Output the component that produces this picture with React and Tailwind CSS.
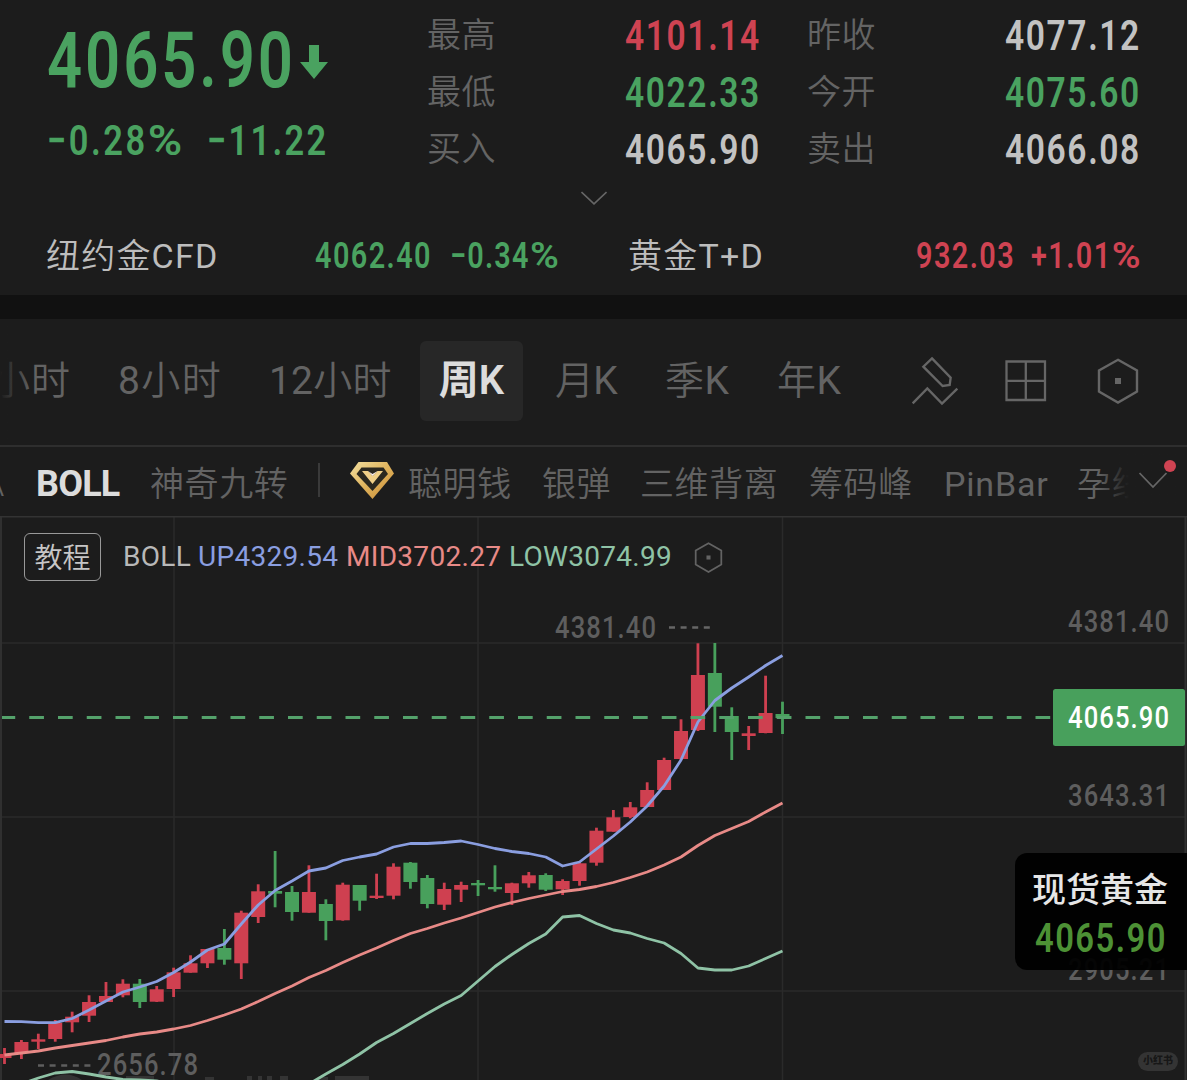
import clsx from "clsx";

const sans = "font-['Roboto','Noto_Sans_CJK_SC',sans-serif]";

const quotes = [
  { label: "最高", value: "4101.14", color: "text-[#cf4352]" },
  { label: "昨收", value: "4077.12", color: "text-[#c2c2c2]" },
  { label: "最低", value: "4022.33", color: "text-[#4aa260]" },
  { label: "今开", value: "4075.60", color: "text-[#4aa260]" },
  { label: "买入", value: "4065.90", color: "text-[#c2c2c2]" },
  { label: "卖出", value: "4066.08", color: "text-[#c2c2c2]" },
];

const periods = [
  { latin: "8", label: "小时", width: "w-[151px] tracking-[1.4px]" },
  { latin: "12", label: "小时", width: "w-[151px] tracking-[0.2px]" },
  { label: "周", unit: "K", active: true },
  { label: "月", unit: "K", width: "w-[110px] tracking-[-0.7px]" },
  { label: "季", unit: "K", width: "w-[112px] tracking-[0.6px]" },
  { label: "年", unit: "K", width: "w-[134px] tracking-[0.6px]" },
];

const indicators = [
  { label: "聪明钱", width: "w-[134px]" },
  { label: "银弹", width: "w-[98px]" },
  { label: "三维背离", width: "w-[169px]" },
  { label: "筹码峰", width: "w-[135px]" },
  { label: "PinBar", width: "w-[133px] font-normal tracking-[0.8px]" },
  { label: "孕线", width: "w-[70px]" },
];

const STEP = 16.913;
const xAt = (i) => 4.5 + i * STEP;

// [direction, body top, body bottom, high, low]
const candles = [
  ["up", 1054, 1058, 1048, 1064],
  ["up", 1042, 1053, 1040, 1059],
  ["up", 1039.3, 1041.7, 1033.7, 1049],
  ["up", 1022.7, 1039, 1020, 1041.7],
  ["up", 1016.7, 1022.3, 1011.7, 1032.3],
  ["up", 1002, 1015.7, 995.3, 1022],
  ["up", 996, 1002, 982, 1002],
  ["up", 983.7, 995.3, 979.3, 997.3],
  ["down", 983.7, 1002, 979, 1008],
  ["up", 989.3, 1001.7, 986, 1002],
  ["up", 972.3, 989, 967.7, 997],
  ["up", 963.3, 972.7, 955.3, 972.7],
  ["up", 949, 963.3, 949, 968],
  ["down", 948, 959.7, 929, 964.7],
  ["up", 912.7, 963.3, 910.7, 979],
  ["up", 891.3, 917, 884.3, 923],
  ["down", 891, 893.7, 851, 907.3],
  ["down", 892, 912, 886, 920.7],
  ["up", 892, 912.7, 865.3, 912.7],
  ["down", 904, 921, 899.3, 940.3],
  ["up", 884.7, 920.3, 882.7, 920.7],
  ["down", 885, 900.7, 885, 910.7],
  ["up", 895.7, 898, 873.7, 899],
  ["up", 866.7, 895.7, 863.3, 899.3],
  ["down", 862.7, 882, 862, 888.7],
  ["down", 878, 904, 875, 908.3],
  ["up", 889, 904.7, 882.7, 910],
  ["up", 885, 889.7, 881.7, 902],
  ["down", 883, 885.3, 880, 896],
  ["down", 887, 889.3, 865.3, 891.7],
  ["up", 883.3, 893, 882.7, 905],
  ["up", 875.3, 883.3, 872, 887.7],
  ["down", 875, 889.7, 873.3, 891],
  ["up", 881, 889.3, 879.3, 895],
  ["up", 863.3, 881, 862.7, 885.7],
  ["up", 830.7, 862.7, 827.7, 865.7],
  ["up", 817.3, 831.7, 810, 831.7],
  ["up", 807.3, 817, 802, 818.3],
  ["up", 790, 807, 782.3, 807],
  ["up", 760, 790, 757.7, 790],
  ["up", 731, 759, 719.3, 760],
  ["up", 675, 730, 643.3, 731],
  ["down", 673, 706.7, 643, 732],
  ["down", 716, 732, 707.3, 760],
  ["up", 733.3, 736, 726, 750],
  ["up", 713, 733, 675.7, 733.3],
  ["down", 714, 718, 701.7, 734],
];

const upper = [
  1021.5, 1021.7, 1022.7, 1022.7, 1018.5, 1010, 1001, 992, 987, 981.5, 972.5,
  962, 950, 944, 924, 905, 890.5, 881, 871, 868, 860.5, 857, 854, 847, 843.5,
  843.5, 842.5, 841, 844.5, 848.5, 851.5, 853.5, 857, 866, 862, 849, 836, 822,
  806, 786, 760, 722, 700.5, 688, 677, 665.5, 655.5,
];

const middle = [
  1055, 1053, 1051, 1048, 1045.5, 1043, 1040.5, 1037, 1034, 1032, 1029, 1025.5,
  1020.5, 1015, 1009, 1001.5, 993.5, 986, 977.5, 970.5, 962.5, 955, 948, 940.5,
  933.5, 928.5, 923, 918, 912.5, 907, 902.5, 898.5, 895, 891.5, 889.5, 886.5,
  882.5, 877.5, 872, 865, 857, 845.5, 835.5, 828.5, 821.5, 812, 803,
];

const lower = [
  1090, 1084, 1078, 1073, 1071.5, 1074, 1077, 1079.5, 1080, 1081, 1084, 1088,
  1092, 1095, 1097, 1097, 1095, 1090, 1084, 1074, 1064.5, 1054, 1042.5, 1033.5,
  1023.5, 1013.5, 1004, 995.5, 981, 966.5, 954.5, 943.5, 934, 917, 915.5, 923.5,
  930, 933, 938.5, 943, 953.5, 968, 970, 970, 966, 958.5, 951,
];

const toPoints = (values) => values.map((y, i) => `${xAt(i)},${y}`).join(" ");

// Condensed digits, squeezed towards one edge
function Num({ children, className, right }) {
  return (
    <span
      className={clsx(
        "inline-block whitespace-nowrap font-semibold scale-x-[0.8]",
        right ? "origin-right" : "origin-left",
        className
      )}
    >
      {children}
    </span>
  );
}

function Percent({ value, className }) {
  return (
    <Num className={className}>
      {value}
      <span className="inline-block origin-left scale-x-[1.36]">%</span>
    </Num>
  );
}

function Hexagon({ className, strokeWidth }) {
  return (
    <svg viewBox="0 0 42 46" className={className} fill="none">
      <path
        d="M21 1.8 40 12.5V33.5L21 44.5 2 33.5V12.5Z"
        stroke="currentColor"
        strokeWidth={strokeWidth}
      />
      <rect x="18" y="20" width="6" height="6" fill="currentColor" />
    </svg>
  );
}

function Summary() {
  return (
    <section className="h-[295px]">
      <div className="flex h-[178px] pl-[47px]">
        <div className="w-[380px] text-[#4aa260]">
          <div className="flex h-[121px] items-center pt-[2px]">
            <div className="w-[253px]">
              <Num className="text-[77px] leading-[119px] tracking-[3.6px]">
                4065.90
              </Num>
            </div>
            <svg viewBox="0 0 28 34" className="h-[34px] w-[28px]">
              <path d="M9 0H19V17H28L14 34 0 17H9Z" fill="currentColor" />
            </svg>
          </div>
          <div className="flex h-[40px] text-[43px] leading-[38px]">
            <div className="w-[160px]">
              <Percent value="−0.28" className="tracking-[3.2px]" />
            </div>
            <Num className="tracking-[2.9px]">−11.22</Num>
          </div>
        </div>
        <div className="grid h-[178px] grid-cols-[380px_334px] grid-rows-3 pt-[7px]">
          {quotes.map(({ label, value, color }) => (
            <div
              key={label}
              className="flex w-[334px] items-center justify-between leading-[57px]"
            >
              <span className="text-[34px] font-[350] tracking-[0.6px] text-[#646464]">
                {label}
              </span>
              <Num right className={clsx("text-[42px] tracking-[2px]", color)}>
                {value}
              </Num>
            </div>
          ))}
        </div>
      </div>
      <div className="flex h-[40px] justify-center pt-[13px]">
        <svg viewBox="0 0 26 14" className="h-[14px] w-[26px]" fill="none">
          <path d="M0.5 1 13 12.8 25.5 1" stroke="#666" strokeWidth="1.6" />
        </svg>
      </div>
      <div className="flex h-[76px] items-center pl-[46px] text-[34px] leading-[40px] text-[#bdbdbd]">
        <span className="w-[269px] font-[350] tracking-[1.2px]">
          纽约金<span className="font-normal">CFD</span>
        </span>
        <div className="flex w-[313px] text-[36px] text-[#4aa260]">
          <div className="w-[135px]">
            <Num className="tracking-[1.8px]">4062.40</Num>
          </div>
          <Percent value="−0.34" className="tracking-[1.5px]" />
        </div>
        <span className="w-[288px] font-[350] tracking-[1.2px]">
          黄金<span className="font-normal">T+D</span>
        </span>
        <div className="flex text-[36px] text-[#cf4352]">
          <div className="w-[115px]">
            <Num className="tracking-[1.8px]">932.03</Num>
          </div>
          <Percent value="+1.01" className="tracking-[1.8px]" />
        </div>
      </div>
    </section>
  );
}

function PeriodTabs() {
  return (
    <nav className="relative flex h-[126px] items-center overflow-hidden pb-[2px] text-[39px] font-[350] leading-[80px] text-[#636363]">
      <span className="-ml-[9px] w-[127px] shrink-0 whitespace-nowrap tracking-[1px]">
        小时
      </span>
      {periods.map(({ latin, label, unit, width, active }) =>
        active ? (
          <span
            key={label}
            className="mr-8 h-[80px] w-[103px] shrink-0 rounded-md bg-[#272727] text-center text-[40px] font-semibold text-[#dcdcdc]"
          >
            {label}
            {unit}
          </span>
        ) : (
          <span
            key={`${latin}${label}`}
            className={clsx("shrink-0 whitespace-nowrap", width)}
          >
            {latin && <span className="font-normal">{latin}</span>}
            {label}
            {unit && <span className="font-normal">{unit}</span>}
          </span>
        )
      )}
      <svg
        viewBox="372 162 144 156"
        className="h-[52px] w-[48px] shrink-0"
        fill="none"
        stroke="#666"
        strokeWidth="7"
      >
        <path d="M435 172 491 230 488 252 467 255 409 197Z" />
        <path d="M377 307 421 262 465 308 511 263" />
      </svg>
      <svg
        viewBox="0 0 42 42"
        className="ml-[46px] h-[42px] w-[42px] shrink-0"
        fill="none"
        stroke="#666"
        strokeWidth="2.3"
      >
        <path d="M1.5 1.5H40V40H1.5ZM20.8 1.5V40M1.5 20.8H40" />
      </svg>
      <Hexagon
        className="ml-[50px] h-[46px] w-[42px] shrink-0 text-[#666]"
        strokeWidth="2.4"
      />
      <div className="absolute left-0 top-0 h-full w-[32px] bg-linear-to-r from-[#1c1c1c] to-transparent" />
    </nav>
  );
}

function Diamond() {
  return (
    <svg viewBox="0 0 44 37" className="h-[37px] w-[44px] shrink-0">
      <defs>
        <linearGradient id="gold" x1="0" y1="0" x2="1" y2="1">
          <stop offset="0" stopColor="#f3dfa0" />
          <stop offset="0.5" stopColor="#dfb35c" />
          <stop offset="1" stopColor="#c98a35" />
        </linearGradient>
      </defs>
      <path d="M8.5 0H37L44 11.5 22.5 37 0 11.5Z" fill="url(#gold)" />
      <path d="M11.5 5.5H33.5L38 12 22.5 29 6.5 12Z" fill="#2b281f" />
      <path d="M12 9H18L22.5 14 27.5 9H33L22.5 22Z" fill="#f0cf87" />
      <path d="M18 9 22.5 14 27.5 9 22.5 12Z" fill="#fff3f0" />
    </svg>
  );
}

function IndicatorTabs() {
  return (
    <nav className="relative flex h-[71px] items-center overflow-hidden border-t-2 border-[#2e2e2e] pt-[4px] text-[34px] font-[350] leading-[66px] tracking-[0.6px] text-[#636363]">
      <span className="-ml-[17px] w-[53px] shrink-0">A</span>
      <span className="w-[114px] shrink-0 text-[36px] font-bold tracking-[-0.8px] text-[#dcdcdc]">
        BOLL
      </span>
      <span className="w-[168px] shrink-0">神奇九转</span>
      <span className="mb-2 h-[34px] w-[2px] shrink-0 bg-[#3a3a3a]" />
      <div className="mb-[7px] ml-[30px] mr-[14px]">
        <Diamond />
      </div>
      {indicators.map(({ label, width }) => (
        <span
          key={label}
          className={clsx("shrink-0 overflow-hidden whitespace-nowrap", width)}
        >
          {label}
        </span>
      ))}
      <div className="absolute right-0 top-0 flex h-full w-[89px] items-center bg-linear-to-r from-transparent via-[#1c1c1c] via-35% to-[#1c1c1c] pl-[40px]">
        <svg viewBox="0 0 40 30" className="mb-[16px] h-[30px] w-[40px]" fill="none">
          <path d="M1.5 14 15 28 28.5 14" stroke="#666" strokeWidth="1.8" />
          <circle cx="32" cy="7" r="6" fill="#cf4352" />
        </svg>
      </div>
    </nav>
  );
}

function AxisLabel({ x, y, width = 101, fill = "#5e5e5e", children }) {
  return (
    <text
      x={x}
      y={y}
      textLength={width / 0.8}
      fontSize="32"
      fill={fill}
      fontWeight="550"
      transform={`translate(${x * 0.2} 0) scale(0.8 1)`}
    >
      {children}
    </text>
  );
}

function Chart() {
  return (
    <svg viewBox="0 516 1187 564" className="h-[564px] w-[1187px]" fill="none">
      <g stroke="#2a2a2a" strokeWidth="1.6">
        <path d="M1 643H1185M1 817H1185M1 991H1185" />
        <path d="M174 516V1080M478 516V1080M782.5 516V1080" />
        <path d="M1 516V1080M1185.5 516V1080" strokeWidth="2" stroke="#303030" />
      </g>
      <path d="M0 516H1187" stroke="#333" strokeWidth="3" />

      <g fill="#343434">
        <path d="M48 1080Q66 1069 82 1080ZM126 1076H154V1080H126ZM205 1077H214V1080H205Z" />
        <path d="M247 1076H252V1080H247ZM258 1076H262V1080H258ZM267 1076H272V1080H267ZM280 1076H288V1080H280ZM319 1077H328V1080H319ZM335 1076H369V1080H335Z" />
      </g>

      {candles.map(([dir, top, bottom, high, low], i) => {
        const color = dir === "up" ? "#cf4050" : "#48a05c";
        return (
          <g key={i}>
            <rect x={xAt(i) - 1.4} y={high} width="2.8" height={low - high} fill={color} />
            <rect x={xAt(i) - 7} y={top} width="14" height={bottom - top} fill={color} />
          </g>
        );
      })}
      <path d="M669 627.5H710" stroke="#666" strokeWidth="2.4" strokeDasharray="6 5.6" />
      <path d="M38 1065.5H91" stroke="#5e5e5e" strokeWidth="2.4" strokeDasharray="6 5.6" />
      <AxisLabel x={555} y={638}>4381.40</AxisLabel>
      <AxisLabel x={97} y={1075.5}>2656.78</AxisLabel>
      <AxisLabel x={1068} y={632.5}>4381.40</AxisLabel>
      <AxisLabel x={1068} y={806.5}>3643.31</AxisLabel>
      <AxisLabel x={1068} y={980.5}>2905.21</AxisLabel>

      <g strokeWidth="2.8" strokeLinejoin="round">
        <polyline points={toPoints(lower)} stroke="#8fc3a6" />
        <polyline points={toPoints(middle)} stroke="#e88a87" />
        <polyline points={toPoints(upper)} stroke="#8a9ee0" />
      </g>
      <path
        d="M2 717.5H1053"
        stroke="#54a26b"
        strokeWidth="2.8"
        strokeDasharray="14.7 14.05"
        strokeDashoffset="1.5"
      />
      <rect x="1053" y="689" width="132" height="57" rx="2.5" fill="#48a05c" />
      <AxisLabel x={1068} y={728} fill="#fff">4065.90</AxisLabel>
    </svg>
  );
}

export default function App() {
  return (
    <main className={clsx("h-[1080px] w-[1187px] overflow-hidden bg-[#1c1c1c]", sans)}>
      <Summary />
      <div className="h-6 bg-[#111]" />
      <PeriodTabs />
      <IndicatorTabs />
      <div className="relative">
        <Chart />
        <div className="absolute left-[24px] top-[17px] flex h-[48px] items-center text-[28px]">
          <span className="mr-[22px] h-[48px] w-[77px] rounded-md border border-[#999] text-center font-[350] leading-[49px] text-[#c6c6c6]">
            教程
          </span>
          <div className="flex tracking-[0.3px]">
            <span className="w-[75px] text-[#b8b8b8]">BOLL</span>
            <span className="w-[148px] text-[#8a9ee0]">UP4329.54</span>
            <span className="w-[163px] text-[#e88a87]">MID3702.27</span>
            <span className="w-[185px] text-[#8fc3a6]">LOW3074.99</span>
          </div>
          <Hexagon className="h-[31px] w-[29px] text-[#636363]" strokeWidth="2.6" />
        </div>
        <div className="absolute right-0 top-[337px] h-[117px] w-[172px] rounded-l-xl bg-black/95 pl-[17px] pt-[12px]">
          <div className="h-[49px] text-[34px] font-medium leading-[50px] text-[#e6e6e6]">
            现货黄金
          </div>
          <Num className="ml-[3px] text-[41px] leading-[48px] tracking-[1.8px] text-[#4d9135]">
            4065.90
          </Num>
        </div>
        <span className="absolute right-[9px] top-[536px] h-[19px] w-[40px] rounded-full bg-[#343434] text-center text-[10px] font-black leading-[18px] text-[#171717]">
          小红书
        </span>
      </div>
    </main>
  );
}
